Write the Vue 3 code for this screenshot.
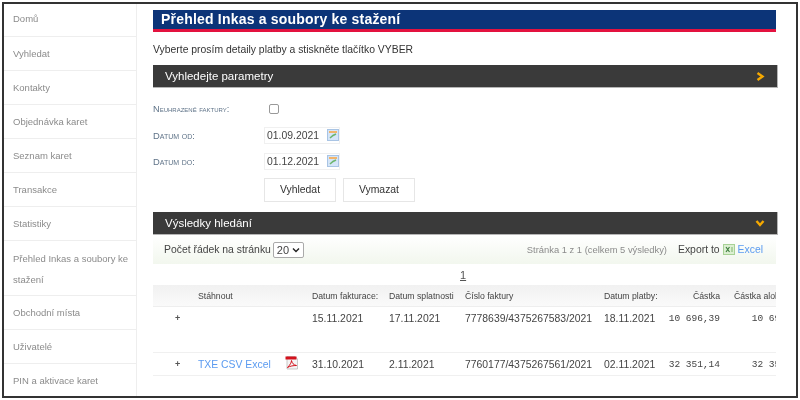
<template>
  <div class="page">
    <div class="frame">
      <nav class="side">
        <a v-for="item in menu" :key="item" class="side-item">{{ item }}</a>
      </nav>
      <main class="main">
        <h1 class="title">Přehled Inkas a soubory ke stažení</h1>
        <p class="intro">Vyberte prosím detaily platby a stiskněte tlačítko VYBER</p>
        <div class="bar">
          <span>Vyhledejte parametry</span>
          <svg width="9" height="9" viewBox="0 0 9 9"><path d="M1.5 1 L6.5 4.5 L1.5 8" fill="none" stroke="#f5a800" stroke-width="2.4" /></svg>
        </div>
        <form class="filter" @submit.prevent>
          <label class="lbl lbl-small">Neuhrazené faktury:</label>
          <div class="val"><span class="check"></span></div>
          <label class="lbl">Datum od:</label>
          <div class="val">
            <span class="date">01.09.2021</span>
            <svg class="cal" width="12" height="12" viewBox="0 0 12 12"><rect x=".5" y=".5" width="11" height="11" fill="#d5e5f8" stroke="#a9c4e4" /><rect x="2" y="2" width="8" height="2" fill="#f2b46a" /><path d="M3 9 L6 6.5 L9 5" stroke="#6db56d" stroke-width="1.6" fill="none" /></svg>
          </div>
          <label class="lbl">Datum do:</label>
          <div class="val">
            <span class="date">01.12.2021</span>
            <svg class="cal" width="12" height="12" viewBox="0 0 12 12"><rect x=".5" y=".5" width="11" height="11" fill="#d5e5f8" stroke="#a9c4e4" /><rect x="2" y="2" width="8" height="2" fill="#f2b46a" /><path d="M3 9 L6 6.5 L9 5" stroke="#6db56d" stroke-width="1.6" fill="none" /></svg>
          </div>
          <div></div>
          <div class="btns">
            <button class="btn" type="button">Vyhledat</button>
            <button class="btn" type="button">Vymazat</button>
          </div>
        </form>
        <div class="bar bar-results">
          <span>Výsledky hledání</span>
          <svg width="10" height="9" viewBox="0 0 10 9"><path d="M1.5 2 L5 6 L8.5 2" fill="none" stroke="#f5a800" stroke-width="2.4" /></svg>
        </div>
        <div class="tools">
          <div class="per-page">
            Počet řádek na stránku
            <span class="select">20
              <svg width="8" height="6" viewBox="0 0 8 6"><path d="M1 1.5 L4 4.5 L7 1.5" fill="none" stroke="#222" stroke-width="1.4" /></svg>
            </span>
          </div>
          <div class="tools-right">
            <span class="paging">Stránka 1 z 1 (celkem 5 výsledky)</span>
            <span class="export">Export to</span>
            <svg width="12" height="11" viewBox="0 0 12 11"><rect x=".5" y=".5" width="11" height="10" fill="#dcefd2" stroke="#a8d296" /><path d="M3 3 L6.5 8 M6.5 3 L3 8" stroke="#3f7f3f" stroke-width="1.2" /><path d="M9 3 V8" stroke="#7fb56a" /></svg>
            <a class="link">Excel</a>
          </div>
        </div>
        <div class="pager"><u>1</u></div>
        <div class="grid-wrap">
          <table class="grid">
            <colgroup>
              <col style="width: 45px" /><col style="width: 114px" /><col style="width: 77px" /><col style="width: 76px" />
              <col style="width: 139px" /><col style="width: 64px" /><col style="width: 52px" /><col style="width: 83px" />
            </colgroup>
            <thead>
              <tr>
                <th></th>
                <th>Stáhnout</th>
                <th>Datum fakturace:</th>
                <th>Datum splatnosti</th>
                <th>Číslo faktury</th>
                <th>Datum platby:</th>
                <th class="num">Částka</th>
                <th class="num">Částka alokováno</th>
              </tr>
            </thead>
            <tbody>
              <tr v-for="row in rows" :key="row.invoice" :class="row.cls">
                <td class="plus">+</td>
                <td>
                  <div v-if="row.files" class="files">
                    <a class="link">TXE CSV Excel</a>
                    <svg class="pdf" width="14" height="14" viewBox="0 0 14 14"><path d="M2 .5 H10 L12.5 3 V13 H2 Z" fill="#f4f4f4" stroke="#bbb" stroke-width=".8" /><rect x=".5" y=".5" width="11" height="3" fill="#d4111c" /><path d="M2.5 11.5 C5 9 6.5 6.5 6.5 4.5 C7 7 8.5 9 11.5 9.5 C8.5 9.5 5 10 2.5 11.5 Z" fill="none" stroke="#d4111c" stroke-width="1" /></svg>
                  </div>
                </td>
                <td>{{ row.billed }}</td>
                <td>{{ row.due }}</td>
                <td>{{ row.invoice }}</td>
                <td>{{ row.paid }}</td>
                <td class="num mono">{{ row.amount }}</td>
                <td class="num mono">{{ row.amount }}</td>
              </tr>
            </tbody>
          </table>
        </div>
      </main>
    </div>
  </div>
</template>

<script setup>
const menu = [
  'Domů',
  'Vyhledat',
  'Kontakty',
  'Objednávka karet',
  'Seznam karet',
  'Transakce',
  'Statistiky',
  'Přehled Inkas a soubory ke stažení',
  'Obchodní místa',
  'Uživatelé',
  'PIN a aktivace karet',
]

const rows = [
  { billed: '15.11.2021', due: '17.11.2021', invoice: '7778639/4375267583/2021', paid: '18.11.2021', amount: '10 696,39', files: false, cls: 'tall' },
  { billed: '31.10.2021', due: '2.11.2021', invoice: '7760177/4375267561/2021', paid: '02.11.2021', amount: '32 351,14', files: true, cls: 'short' },
]
</script>

<style>
html, body { margin: 0; background: #fff; }
</style>

<style scoped>
.page {
  box-sizing: border-box;
  width: 800px;
  height: 400px;
  padding: 2px;
  background: #fff;
}
.frame {
  box-sizing: border-box;
  height: 100%;
  display: flex;
  overflow: hidden;
  background: #fff;
  border: 2px solid #333;
  font-family: "Liberation Sans", Arial, sans-serif;
  color: #333;
}
.side {
  flex: 0 0 133px;
  box-sizing: border-box;
  margin-top: -1px;
  border-right: 1px solid #eee;
  filter: blur(.45px);
}
.side-item {
  display: block;
  padding: 8px 0 8px 9px;
  line-height: 17px;
  font-size: 9.5px;
  color: #8b8b8b;
  border-bottom: 1px solid #eee;
}
.side-item:first-child { padding: 7px 0 9px 9px; }
.side-item:nth-child(8) {
  padding: 8px 0 5px 9px;
  line-height: 20.5px;
}
.side-item:last-child { border-bottom: 0; }
.main {
  flex: 1;
  min-width: 0;
  margin-left: 16px;
  overflow: hidden;
  padding-top: 6px;
  filter: blur(.45px);
}
.title {
  box-sizing: border-box;
  width: 623px;
  height: 22px;
  margin: 0;
  padding: 0 8px;
  background: #0c3478;
  border-bottom: 3px solid #e3123f;
  color: #fff;
  font-size: 14px;
  line-height: 19px;
  font-weight: 700;
  letter-spacing: .2px;
}
.intro {
  margin: 11px 0 0;
  font-size: 10.4px;
  line-height: 14px;
  color: #333;
}
.bar {
  display: flex;
  justify-content: space-between;
  align-items: center;
  box-sizing: border-box;
  width: 625px;
  height: 23px;
  margin-top: 8px;
  padding: 0 12px;
  background: #3a3a3a;
  border: 1px solid #b5b5b5;
  border-width: 0 1px 1px 0;
  color: #fff;
  font-size: 11.5px;
}
.filter {
  display: grid;
  grid-template-columns: 112px 1fr;
  grid-auto-rows: 26px;
  align-items: center;
  margin-top: 8px;
}
.lbl {
  font-size: 9.4px;
  font-variant: small-caps;
  color: #5f7388;
}
.lbl-small { font-size: 9.2px; }
.val { display: flex; align-items: center; }
.check {
  width: 8px;
  height: 8px;
  margin-left: 4px;
  border: 1px solid #999;
  border-radius: 2px;
  background: #fff;
}
.date {
  box-sizing: border-box;
  width: 76px;
  height: 17px;
  margin-left: -1px;
  padding-left: 2px;
  border: 1px solid #f0f0f0;
  font-size: 10.4px;
  line-height: 15px;
  color: #444;
}
.cal { margin-left: -13px; }
.btns { display: flex; gap: 7px; margin-top: 5px; margin-left: -1px; }
.btn {
  box-sizing: border-box;
  width: 72px;
  height: 24px;
  padding: 0;
  background: #fff;
  border: 1px solid #e6e6e6;
  font: 10.4px "Liberation Sans", Arial, sans-serif;
  color: #333;
}
.bar-results { margin-top: 12px; }
.tools {
  display: flex;
  justify-content: space-between;
  align-items: center;
  width: 623px;
  box-sizing: border-box;
  height: 29px;
  padding: 0 13px 0 11px;
  background: linear-gradient(#fff, #f2f7ee);
  font-size: 10.4px;
  color: #444;
}
.per-page { display: flex; align-items: center; gap: 2px; }
.select {
  display: inline-flex;
  align-items: center;
  gap: 3px;
  box-sizing: border-box;
  height: 16px;
  padding: 0 3px;
  border: 1px solid #aaa;
  border-radius: 2px;
  font-size: 11px;
  background: #fff;
}
.tools-right { display: flex; align-items: center; }
.paging { font-size: 9.4px; color: #8b8b8b; }
.export { margin: 0 3px 0 11px; font-size: 10.4px; }
.link { color: #5b9bf0; }
.tools-right .link { margin-left: 3px; }
.pager {
  width: 623px;
  height: 21px;
  padding-left: 307px;
  box-sizing: border-box;
  font-size: 11px;
  line-height: 23px;
  color: #555;
}
.grid-wrap { width: 623px; overflow: hidden; }
.grid {
  table-layout: fixed;
  width: 650px;
  border-collapse: collapse;
}
.grid th {
  height: 21px;
  padding: 0;
  text-align: left;
  font-size: 8.7px;
  font-weight: 400;
  color: #444;
  white-space: nowrap;
  background: linear-gradient(#f1f1f1, #fafafa);
  border-bottom: 1px solid #eee;
}
.grid td {
  padding: 0;
  font-size: 10.4px;
  color: #444;
  white-space: nowrap;
  border-bottom: 1px solid #f0f0f0;
}
.grid .num { text-align: right; }
.grid .mono {
  font-family: "Liberation Mono", monospace;
  font-size: 9.5px;
}
.grid .plus { padding-left: 22px; font-size: 9px; color: #555; font-weight: 700; }
.tall td { height: 46px; vertical-align: top; padding-top: 6px; box-sizing: border-box; }
.short td { height: 22px; }
.files { display: flex; align-items: flex-start; gap: 14px; }
.pdf { margin-top: -3px; }
</style>
